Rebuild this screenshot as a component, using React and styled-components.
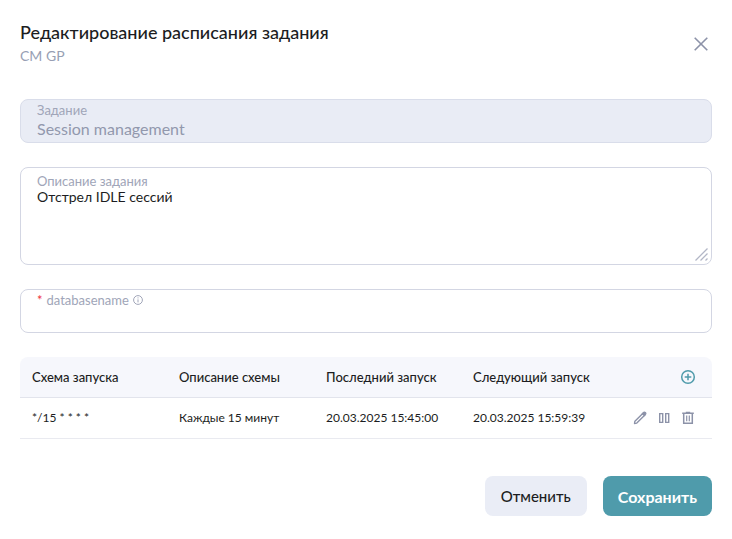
import React, { useState } from "react";
import styled, { createGlobalStyle } from "styled-components";

const GlobalStyle = createGlobalStyle`
  *, *::before, *::after { box-sizing: border-box; }
  body {
    margin: 0;
    background: #fff;
    color: #1c1d22;
    font-family: Lato, "Noto Sans", sans-serif;
    font-size: 15px;
  }
  button, input, textarea { font: inherit; color: inherit; }
`;

const Dialog = styled.form`
  display: flex;
  flex-direction: column;
  gap: 24px;
  padding: 20px;
`;

const Header = styled.header`
  display: flex;
  align-items: center;
  justify-content: space-between;
  padding-bottom: 7px;
`;

const Title = styled.h1`
  margin: 0;
  font-size: 18px;
  line-height: 24px;
  font-weight: 500;
`;

const Subtitle = styled.p`
  margin: 0;
  font-size: 14px;
  line-height: 24px;
  color: #989fb4;
`;

const IconButton = styled.button`
  display: flex;
  padding: 0;
  border: 0;
  background: none;
  color: ${(p) => (p.$accent ? "#4f9bab" : "#8c92a8")};
  cursor: pointer;
`;

const CloseButton = styled(IconButton)`
  padding: 4px;
`;

const Field = styled.div`
  display: flex;
  flex-direction: column;
  position: relative;
  padding: ${(p) => (p.$multiline ? "5px 16px" : "2px 16px")};
  min-height: ${(p) => (p.$multiline ? "98px" : "44px")};
  border: 1px solid ${(p) => (p.$disabled ? "#d9ddea" : "#d3d6e3")};
  border-radius: 8px;
  background: ${(p) => (p.$disabled ? "#e9ecf5" : "#fff")};
`;

const Label = styled.label`
  display: flex;
  align-items: center;
  gap: 4px;
  font-size: 13px;
  line-height: 16px;
  color: #a0a5b8;
`;

const Required = styled.span`
  color: #ee3340;
`;

const Input = styled.input`
  width: 100%;
  height: 20px;
  padding: 0;
  border: 0;
  outline: 0;
  font-size: 16px;
  background: transparent;
  &:disabled { color: #9298ad; }
`;

const TextArea = styled.textarea`
  width: 100%;
  flex: 1;
  padding: 0;
  border: 0;
  outline: 0;
  resize: none;
  font-size: 14px;
  line-height: 16px;
  background: transparent;
`;

const Grip = styled.svg`
  position: absolute;
  right: 3px;
  bottom: 3px;
  pointer-events: none;
`;

const Table = styled.table`
  width: 100%;
  table-layout: fixed;
  border-collapse: separate;
  border-spacing: 0;
  font-size: 12px;
  line-height: 16px;
`;

const HeadCell = styled.th`
  width: ${(p) => (p.$actions ? "104px" : "auto")};
  padding: 12px;
  text-align: left;
  font-size: 13px;
  font-weight: 500;
  white-space: nowrap;
  background: #f6f7fc;
  border-bottom: 1px solid #e2e4ec;
  &:first-child { border-top-left-radius: 8px; }
  &:last-child { border-top-right-radius: 8px; }
`;

const Cell = styled.td`
  padding: 12px;
  white-space: nowrap;
  border-bottom: 1px solid #e9eaf0;
`;

const Actions = styled.div`
  display: flex;
  justify-content: flex-end;
  gap: 8px;
  padding-right: 4px;
`;

const Footer = styled.footer`
  display: flex;
  justify-content: flex-end;
  gap: 16px;
  padding-top: 13px;
`;

const Button = styled.button`
  height: 40px;
  padding: 0 ${(p) => (p.$primary ? "15px" : "16px")};
  border: 0;
  border-radius: 8px;
  font-size: ${(p) => (p.$primary ? "16px" : "15px")};
  font-weight: ${(p) => (p.$primary ? 700 : 500)};
  background: ${(p) => (p.$primary ? "#4f9bab" : "#eaedf6")};
  color: ${(p) => (p.$primary ? "#fff" : "#1c1d22")};
  cursor: pointer;
`;

const CloseIcon = () => (
  <svg width="14" height="14" viewBox="0 0 14 14" fill="none" stroke="currentColor" strokeWidth="1.6">
    <path d="M.7.7l12.6 12.6M13.3.7L.7 13.3" />
  </svg>
);

const InfoIcon = () => (
  <svg width="10" height="10" viewBox="0 0 10 10" fill="none" stroke="currentColor">
    <circle cx="5" cy="5" r="4.4" strokeWidth="1" />
    <path d="M5 4.4v3M5 2.4v1" />
  </svg>
);

const AddIcon = () => (
  <svg width="16" height="16" viewBox="0 0 16 16" fill="none" stroke="currentColor" strokeWidth="1.5">
    <circle cx="8" cy="8" r="6.3" />
    <path d="M8 4.7v6.6M4.7 8h6.6" />
  </svg>
);

const EditIcon = () => (
  <svg width="16" height="16" viewBox="0 0 16 16" fill="none" stroke="currentColor" strokeWidth="1.4" strokeLinejoin="round">
    <path d="M2.5 13.5l.4-2.3 8.1-8 1.9 1.9-8.1 8z" />
    <path d="M10.4 3.7l1.5-1.3q.7-.5 1.3.1l.3.3q.6.6.1 1.3l-1.3 1.5z" fill="currentColor" />
  </svg>
);

const PauseIcon = () => (
  <svg width="16" height="16" viewBox="0 0 16 16" fill="none" stroke="currentColor" strokeWidth="1.4">
    <path d="M3.7 3.6h3v8.8h-3zM9.7 3.6h3v8.8h-3z" />
  </svg>
);

const TrashIcon = () => (
  <svg width="16" height="16" viewBox="0 0 16 16" fill="none" stroke="currentColor" strokeWidth="1.5">
    <path d="M2.2 3.2h11.6M5.8 2.5h4.4M3.7 3.2v10h8.6v-10" />
    <path d="M6.7 5.5v5.8M9.3 5.5v5.8" strokeWidth="1.2" />
  </svg>
);

const columns = ["Схема запуска", "Описание схемы", "Последний запуск", "Следующий запуск"];
const schedules = [["*/15 * * * *", "Каждые 15 минут", "20.03.2025 15:45:00", "20.03.2025 15:59:39"]];

export default function App() {
  const [description, setDescription] = useState("Отстрел IDLE сессий");
  const [database, setDatabase] = useState("");

  return (
    <>
      <GlobalStyle />
      <Dialog onSubmit={(e) => e.preventDefault()}>
        <Header>
          <div>
            <Title>Редактирование расписания задания</Title>
            <Subtitle>CM GP</Subtitle>
          </div>
          <CloseButton type="button" aria-label="Закрыть"><CloseIcon /></CloseButton>
        </Header>
        <Field $disabled>
          <Label htmlFor="task">Задание</Label>
          <Input id="task" value="Session management" disabled />
        </Field>
        <Field $multiline>
          <Label htmlFor="description">Описание задания</Label>
          <TextArea id="description" value={description} onChange={(e) => setDescription(e.target.value)} />
          <Grip width="13" height="13" viewBox="0 0 13 13" stroke="#b2b6c6" strokeWidth="1.3">
            <path d="M.5 12.5l12-12M5.5 12.5l7-7M10.5 12.5l2-2" />
          </Grip>
        </Field>
        <Field>
          <Label htmlFor="database">
            <Required>*</Required>databasename<InfoIcon />
          </Label>
          <Input id="database" required value={database} onChange={(e) => setDatabase(e.target.value)} />
        </Field>
        <Table>
          <thead>
            <tr>
              {columns.map((name) => <HeadCell key={name}>{name}</HeadCell>)}
              <HeadCell $actions>
                <Actions>
                  <IconButton $accent type="button" aria-label="Добавить"><AddIcon /></IconButton>
                </Actions>
              </HeadCell>
            </tr>
          </thead>
          <tbody>
            {schedules.map((row) => (
              <tr key={row[0]}>
                {row.map((value) => <Cell key={value}>{value}</Cell>)}
                <Cell>
                  <Actions>
                    <IconButton type="button" aria-label="Изменить"><EditIcon /></IconButton>
                    <IconButton type="button" aria-label="Приостановить"><PauseIcon /></IconButton>
                    <IconButton type="button" aria-label="Удалить"><TrashIcon /></IconButton>
                  </Actions>
                </Cell>
              </tr>
            ))}
          </tbody>
        </Table>
        <Footer>
          <Button type="button">Отменить</Button>
          <Button $primary type="submit">Сохранить</Button>
        </Footer>
      </Dialog>
    </>
  );
}
